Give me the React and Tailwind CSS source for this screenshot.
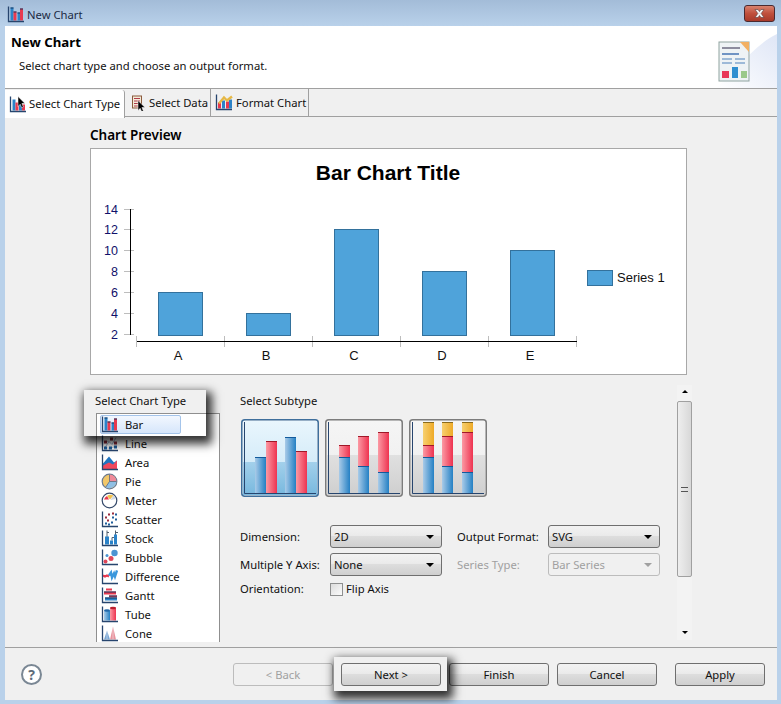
const NAVY = "#27456e";
const RED = "#e8394f";
const BLUE = "#2c83c8";

function Axis() {
  return <path d="M1.500 0v15H17" fill="none" stroke={NAVY} strokeWidth="1.300" />;
}

function Icon({ w = 17, children }) {
  return (
    <svg width={w} height="17" viewBox={`0 0 ${w} 16`} className="shrink-0">
      {children}
    </svg>
  );
}

function BarIcon() {
  return (
    <Icon>
      <rect x="3.500" y="1" width="3" height="13" fill={BLUE} />
      <rect x="6.500" y="5" width="3" height="9" fill={RED} />
      <rect x="10.500" y="6" width="2.500" height="8" fill={BLUE} />
      <rect x="13" y="2" width="3" height="12" fill={RED} />
      <path d="M3.500 1.500h3M6.500 5.500h3M10.500 6.500h2.500M13 2.500h3" stroke="#17375f" strokeWidth="1" />
      <Axis />
    </Icon>
  );
}

function LineIcon() {
  return (
    <Icon>
      <path d="M4 12l4-6 3 3 4-7" fill="none" stroke="#9fb1cc" strokeWidth="1" />
      <path d="M4 6h4M4 12l5 1 5-2" fill="none" stroke="#c2cede" strokeWidth="1" />
      <rect x="3" y="5" width="3" height="3" fill="#8c2b3a" />
      <rect x="9" y="2" width="3" height="3" fill="#8c2b3a" />
      <rect x="13" y="6" width="3" height="3" fill="#8c2b3a" />
      <rect x="3" y="11" width="3" height="3" fill="#1f5e9c" />
      <rect x="8" y="11" width="3" height="3" fill="#1f5e9c" />
      <rect x="13" y="10" width="3" height="3" fill="#1f5e9c" />
      <Axis />
    </Icon>
  );
}

function AreaIcon() {
  return (
    <Icon>
      <path d="M2 9l6-7 5 6 3-2v9H2z" fill="#1f74c0" />
      <path d="M2 11l6-3 4 2 4-4v9H2z" fill="#f0485c" />
      <Axis />
    </Icon>
  );
}

function PieIcon() {
  return (
    <Icon>
      <circle cx="8.500" cy="8" r="7.300" fill="#f2c768" stroke="#6b7a90" strokeWidth="1.200" />
      <path d="M8.500 8V1a7 7 0 0 1 6.800 7z" fill="#f08a9a" />
      <path d="M8.500 8h6.800a7 7 0 0 1-11 5.500z" fill="#8fbfe4" />
      <path d="M8.500 1v7l-4 6M8.500 8h7" fill="none" stroke="#5b6a80" strokeWidth="0.800" />
    </Icon>
  );
}

function MeterIcon() {
  return (
    <Icon>
      <circle cx="8.500" cy="8" r="7.300" fill="#fff" stroke="#34496a" strokeWidth="1.200" />
      <path d="M3 7a6 6 0 0 1 3-3.500L8 7z" fill={RED} />
      <path d="M6 3.500a6 6 0 0 1 6.500-.5L9 7z" fill="#f2c14e" />
      <path d="M12.500 3a6 6 0 0 1 2 3.500L9.500 7.500z" fill="#cfd8e4" />
    </Icon>
  );
}

function ScatterIcon() {
  const red = [[4, 5], [7, 2], [6, 8], [11, 1]];
  const blue = [[11, 5], [14, 7], [10, 10], [4, 11], [7, 12], [14, 2]];
  return (
    <Icon>
      {red.map(([x, y]) => (
        <rect key={`${x}-${y}`} x={x} y={y} width="2" height="2" fill="#9a2b3c" />
      ))}
      {blue.map(([x, y]) => (
        <rect key={`${x}-${y}`} x={x} y={y} width="2" height="2" fill="#1f5e9c" />
      ))}
      <Axis />
    </Icon>
  );
}

function StockIcon() {
  return (
    <Icon>
      <path d="M6 0v7M6 2h2M11 7v3M11 7h2M14.500 0v5M14.500 2h2.500" stroke="#53606f" strokeWidth="1" fill="none" />
      <rect x="4" y="6" width="4" height="8" fill={BLUE} />
      <rect x="9" y="10" width="3" height="4" fill={BLUE} />
      <rect x="13" y="4" width="3" height="10" fill={BLUE} />
      <Axis />
    </Icon>
  );
}

function BubbleIcon() {
  return (
    <Icon>
      <circle cx="13.500" cy="3.500" r="3.200" fill="#4c94d2" />
      <circle cx="10" cy="9" r="2.500" fill="#e0475a" />
      <circle cx="6" cy="6" r="1.500" fill="#4c94d2" />
      <circle cx="4.500" cy="12" r="2" fill="#e0475a" />
      <Axis />
    </Icon>
  );
}

function DifferenceIcon() {
  return (
    <Icon>
      <path d="M2 7l2 1 2-1 2 1" fill="none" stroke={RED} strokeWidth="2.200" />
      <path d="M8 7l2-3 1 5 2-4 1 3 2-6" fill="none" stroke="#3a97dc" strokeWidth="2.400" />
      <Axis />
    </Icon>
  );
}

function GanttIcon() {
  return (
    <Icon>
      <rect x="5" y="1" width="6" height="2" fill={RED} />
      <rect x="3" y="4" width="12" height="3" fill={RED} />
      <rect x="8" y="8" width="8" height="2" fill={RED} />
      <rect x="4" y="10" width="12" height="3" fill={BLUE} />
      <path d="M3 4.500h12M8 8.500h8M4 10.500h12" stroke="#17375f" strokeWidth="1" />
      <Axis />
    </Icon>
  );
}

function TubeIcon() {
  return (
    <Icon>
      <rect x="3" y="4" width="6" height="10" fill="url(#stackBlue)" />
      <rect x="9" y="1" width="6" height="13" fill="url(#stackRed)" />
      <ellipse cx="6" cy="4" rx="3" ry="1.200" fill="#2267a8" />
      <ellipse cx="12" cy="1.500" rx="3" ry="1.200" fill="#b8202f" />
      <Axis />
    </Icon>
  );
}

function ConeIcon() {
  return (
    <Icon>
      <path d="M3 14l3-9 3 9z" fill="#7aa6d4" />
      <path d="M9 14l3-13 3 13z" fill="#e8949e" />
      <path d="M6 5v9M12 1v13" stroke="#fff" strokeWidth="0.800" opacity="0.600" />
      <Axis />
    </Icon>
  );
}

function Cursor({ x, y }) {
  return (
    <path
      transform={`translate(${x} ${y})`}
      d="M0 0v10l2.200-2.200 1.500 3.500 1.700-.8L3.900 7H7z"
      fill="#000"
      stroke="#fff"
      strokeWidth="0.500"
    />
  );
}

function TypeTabIcon() {
  return (
    <Icon>
      <rect x="3.500" y="3" width="3" height="11" fill={BLUE} />
      <rect x="6.500" y="6" width="3" height="8" fill={RED} />
      <rect x="10" y="7" width="3" height="7" fill={BLUE} />
      <rect x="13" y="8" width="3" height="6" fill={RED} />
      <Axis />
      <Cursor x={9} y={0} />
    </Icon>
  );
}

function DataTabIcon() {
  return (
    <Icon w={16}>
      <rect x="1.500" y="1.500" width="9" height="12" fill="#f4ead8" stroke="#8a5a3c" />
      <path d="M3 4h6M3 6.500h6M3 9h6M3 11.500h4" stroke="#b03a48" strokeWidth="1" />
      <Cursor x={7} y={6} />
    </Icon>
  );
}

function FormatTabIcon() {
  return (
    <Icon w={18}>
      <rect x="3" y="8" width="3" height="6" fill={RED} />
      <rect x="7" y="6" width="3" height="8" fill={BLUE} />
      <rect x="11" y="7" width="3" height="7" fill={RED} />
      <rect x="14" y="5" width="3" height="9" fill={BLUE} />
      <path d="M4 9l5-6 3 3 5-4" fill="none" stroke="#e6b845" strokeWidth="2.400" />
      <Axis />
    </Icon>
  );
}

function WizardIcon() {
  return (
    <svg width="62" height="62" viewBox="3 0 62 62" className="shrink-0">
      <defs>
        <linearGradient id="wizardBack" x1="0" y1="1" x2="1" y2="0">
          <stop offset="0" stopColor="#fff" />
          <stop offset="1" stopColor="#dfe6f6" />
        </linearGradient>
      </defs>
      <path d="M4 62C22 48 40 20 65 8v54z" fill="url(#wizardBack)" />
      <rect x="7" y="16" width="30" height="39" fill="#eef3f5" stroke="#8fa3a0" />
      <path d="M28 16h9v10z" fill="#f2b063" />
      <path d="M10 22h18" stroke="#8d8d9e" strokeWidth="2" />
      <path d="M10 28h17" stroke="#6f94c4" strokeWidth="2" />
      <path d="M10 33h10M23 33h10M10 37h10M23 37h10" stroke="#9dbad8" strokeWidth="2" />
      <rect x="10" y="45" width="7" height="7" fill="#e8395a" />
      <rect x="20" y="41" width="6" height="11" fill="#2f8fd0" />
      <rect x="29" y="45" width="6" height="7" fill="#9ac98a" />
    </svg>
  );
}

function Column({ x, top, bottom = 74, fill, line }) {
  return (
    <g>
      <rect x={x} y={top} width="11" height={bottom - top} fill={`url(#${fill})`} />
      <path d={`M${x} ${top + 0.5}h11`} stroke={line} strokeWidth="1" />
    </g>
  );
}

function Stack({ x, blue, red, yellow }) {
  return (
    <g>
      {yellow != null && <Column x={x} top={yellow} bottom={red} fill="stackYellow" line="#8a6a1c" />}
      <Column x={x} top={red} bottom={blue} fill="stackRed" line="#a01828" />
      <Column x={x} top={blue} fill="stackBlue" line="#125a9c" />
    </g>
  );
}

function SubtypeDefs() {
  return (
    <svg width="0" height="0" className="absolute">
      <defs>
        <linearGradient id="stackBlue" x1="0" x2="1" y1="0" y2="0">
          <stop offset="0" stopColor="#a9cbe8" />
          <stop offset="1" stopColor="#2480c4" />
        </linearGradient>
        <linearGradient id="stackRed" x1="0" x2="1" y1="0" y2="0">
          <stop offset="0" stopColor="#fb9aa4" />
          <stop offset="1" stopColor="#ee3350" />
        </linearGradient>
        <linearGradient id="stackYellow" x1="0" x2="1" y1="0" y2="0">
          <stop offset="0" stopColor="#f7d070" />
          <stop offset="1" stopColor="#eeaa28" />
        </linearGradient>
        <linearGradient id="skyTop" x1="0" x2="0" y1="0" y2="1">
          <stop offset="0" stopColor="#e9f6fd" />
          <stop offset="1" stopColor="#c4e3f5" />
        </linearGradient>
        <linearGradient id="skyBottom" x1="0" x2="0" y1="0" y2="1">
          <stop offset="0" stopColor="#a3d0eb" />
          <stop offset="1" stopColor="#78b8de" />
        </linearGradient>
        <linearGradient id="greyTop" x1="0" x2="0" y1="0" y2="1">
          <stop offset="0" stopColor="#f5f5f5" />
          <stop offset="1" stopColor="#ececec" />
        </linearGradient>
        <linearGradient id="greyBottom" x1="0" x2="0" y1="0" y2="1">
          <stop offset="0" stopColor="#e0e0e0" />
          <stop offset="1" stopColor="#cfcfcf" />
        </linearGradient>
      </defs>
    </svg>
  );
}

function SubtypeButton({ selected, children, split }) {
  return (
    <svg width="78" height="78" viewBox="0 0 78 78" className="shrink-0">
      <rect x="2" y="2" width="74" height="74" fill={`url(#${selected ? "skyTop" : "greyTop"})`} />
      <rect x="2" y={split} width="74" height={76 - split} fill={`url(#${selected ? "skyBottom" : "greyBottom"})`} />
      {children}
      <path d="M3.500 3v71.500H75" fill="none" stroke={NAVY} strokeWidth="1" />
      <rect
        x="0.750"
        y="0.750"
        width="76.500"
        height="76.500"
        rx="3"
        fill="none"
        stroke={selected ? "#3f6f9c" : "#7c7c7c"}
        strokeWidth="1.500"
      />
    </svg>
  );
}

function Select({ value, disabled }) {
  return (
    <div
      className={
        disabled
          ? "flex h-[23px] items-center justify-between rounded-[3px] border border-[#bcbcbc] bg-[#f0f0f0] pl-[3px] pr-[7px] text-[#a0a0a0]"
          : "flex h-[23px] items-center justify-between rounded-[3px] border border-[#6f6f6f] bg-[linear-gradient(#f2f2f2_0%,#ebebeb_45%,#dddddd_50%,#cfcfcf_100%)] pl-[3px] pr-[7px] text-[#111]"
      }
    >
      <span>{value}</span>
      <span className={disabled ? "h-0 w-0 border-x-[4px] border-t-[4px] border-x-transparent border-t-[#a0a0a0]" : "h-0 w-0 border-x-[4px] border-t-[4px] border-x-transparent border-t-black"} />
    </div>
  );
}

function WizardButton({ children, disabled, className }) {
  return (
    <div
      className={
        (disabled
          ? "flex h-[23px] items-center justify-center rounded-[3px] border border-[#bcbcbc] bg-[#f0f0f0] text-[#a0a0a0] "
          : "flex h-[23px] items-center justify-center rounded-[3px] border border-[#6f6f6f] bg-[linear-gradient(#f2f2f2_0%,#ebebeb_45%,#dddddd_50%,#cfcfcf_100%)] text-[#111] ") + className
      }
    >
      {children}
    </div>
  );
}

const chartTypes = [
  { label: "Bar", TypeIcon: BarIcon },
  { label: "Line", TypeIcon: LineIcon },
  { label: "Area", TypeIcon: AreaIcon },
  { label: "Pie", TypeIcon: PieIcon },
  { label: "Meter", TypeIcon: MeterIcon },
  { label: "Scatter", TypeIcon: ScatterIcon },
  { label: "Stock", TypeIcon: StockIcon },
  { label: "Bubble", TypeIcon: BubbleIcon },
  { label: "Difference", TypeIcon: DifferenceIcon },
  { label: "Gantt", TypeIcon: GanttIcon },
  { label: "Tube", TypeIcon: TubeIcon },
  { label: "Cone", TypeIcon: ConeIcon },
];

const chartBars = [
  { label: "A", x: 67, top: 143 },
  { label: "B", x: 155, top: 164 },
  { label: "C", x: 243, top: 80 },
  { label: "D", x: 331, top: 122 },
  { label: "E", x: 419, top: 101 },
];

const yTicks = [
  { label: "14", y: 60 },
  { label: "12", y: 80 },
  { label: "10", y: 101 },
  { label: "8", y: 122 },
  { label: "6", y: 143 },
  { label: "4", y: 164 },
  { label: "2", y: 185 },
];

function ChartPreview() {
  return (
    <svg width="595" height="225" viewBox="0 0 595 225" className="block font-['Liberation_Sans',sans-serif]">
      <text x="297" y="31" textAnchor="middle" fontSize="21" fontWeight="700" fill="#000">
        Bar Chart Title
      </text>
      {yTicks.map((t) => (
        <g key={t.label}>
          <path d={`M33 ${t.y + 0.5}h10`} stroke="#bdbdbd" strokeWidth="1" />
          <text x="27" y={t.y + 5} textAnchor="end" fontSize="12.500" fill="#10106a">
            {t.label}
          </text>
        </g>
      ))}
      <path d="M39.500 60v126" stroke="#000" strokeWidth="1" />
      {[46, 134, 222, 310, 398, 486].map((x) => (
        <path key={x} d={`M${x - 0.5} 187v11`} stroke="#bdbdbd" strokeWidth="1" />
      ))}
      <path d="M46 192.500h440" stroke="#000" strokeWidth="1" />
      {chartBars.map((b) => (
        <g key={b.label}>
          <rect x={b.x + 0.5} y={b.top + 0.5} width="44" height={186 - b.top} fill="#4fa3da" stroke="#33719c" strokeWidth="1" />
          <text x={b.x + 20} y="211" textAnchor="middle" fontSize="13" fill="#111">
            {b.label}
          </text>
        </g>
      ))}
      <rect x="496.500" y="121.500" width="25" height="15" fill="#4fa3da" stroke="#33719c" strokeWidth="1" />
      <text x="526" y="133" fontSize="13" fill="#111">
        Series 1
      </text>
    </svg>
  );
}

export default function App() {
  return (
    <div className="flex h-[704px] w-[781px] flex-col overflow-hidden whitespace-nowrap bg-[#b9d1ea] font-['Noto_Sans',sans-serif] text-[11.25px] leading-[18px] text-[#111]">
      <SubtypeDefs />

      <div className="flex h-[26px] shrink-0 items-center bg-[linear-gradient(#a3bcd8,#b9d1ea)] pl-[7px] pr-[6px] pt-[3px]">
        <BarIcon />
        <span className="ml-[3px] text-[#1c2a44]">New Chart</span>
        <div className="-mt-[3px] ml-auto flex h-[17px] w-[31px] items-center justify-center rounded-[3px] border border-[#4a2a30] bg-[linear-gradient(#d8826f,#c0503c_50%,#a83a2a)]">
          <svg width="15" height="11" viewBox="0 0 15 11">
            <path d="M3 1.500h3L7.500 3.500 9 1.500h3L9.200 5.500 12 9.500H9L7.500 7.500 6 9.500H3L5.800 5.500z" fill="#f2f2f2" stroke="#5a3a3a" strokeWidth="0.600" />
          </svg>
        </div>
      </div>

      <div className="ml-[5px] mr-[4px] flex min-h-0 flex-1 flex-col bg-[#f0f0f0]">
        <div className="flex h-[63px] shrink-0 items-end justify-between border-b border-[#a0a0a0] bg-white">
          <div className="self-start pt-[7px]">
            <div className="pl-[6px] text-[13.250px] font-bold leading-[18px] text-black">New Chart</div>
            <div className="pl-[14px] pt-[6px]">Select chart type and choose an output format.</div>
          </div>
          <WizardIcon />
        </div>

        <div className="flex h-[28px] shrink-0 border-b border-[#a0a0a0]">
          <div className="-mb-px mt-px flex h-[28px] w-[120px] items-center rounded-tr-[3px] border-r border-[#a0a0a0] bg-white pl-[4px]">
            <TypeTabIcon />
            <span className="ml-[3px]">Select Chart Type</span>
          </div>
          <div className="flex w-[86px] items-center border-r border-[#a0a0a0] pl-[6px]">
            <DataTabIcon />
            <span className="ml-[2px]">Select Data</span>
          </div>
          <div className="flex w-[98px] items-center border-r border-[#a0a0a0] pl-[4px]">
            <FormatTabIcon />
            <span className="ml-[3px]">Format Chart</span>
          </div>
        </div>

        <div className="ml-[85px] flex w-[602px] flex-1 flex-col">
          <div className="mt-[9px] h-[18px] text-[13.500px] font-semibold text-black">Chart Preview</div>
          <div className="mt-[4px] h-[227px] w-[597px] border border-[#a8a8a8] bg-white">
            <ChartPreview />
          </div>

          <div className="relative mt-[10px] flex h-[257px]">
            <div className="w-[150px]">
              <div className="ml-[5px] mt-[7px]">Select Chart Type</div>
              <div className="ml-[6px] mt-[3px] h-[229px] w-[124px] overflow-hidden border border-b-0 border-[#8f8f8f] bg-white pt-px">
                {chartTypes.map(({ label, TypeIcon }, i) => (
                  <div
                    key={label}
                    className={
                      i === 0
                        ? "ml-[3px] flex h-[19px] w-[81px] items-center rounded-[2px] border border-[#a4c4ea] bg-[linear-gradient(#f2f7fe,#d6e6fb)]"
                        : "ml-[3px] flex h-[19px] w-[81px] items-center border border-transparent"
                    }
                  >
                    <TypeIcon />
                    <span className="ml-[7px]">{label}</span>
                  </div>
                ))}
              </div>
            </div>

            <div className="w-[437px]">
              <div className="mt-[7px]">Select Subtype</div>
              <div className="ml-px mt-[9px] flex gap-[6px]">
                <SubtypeButton selected split={43}>
                  <Column x={14} top={38} fill="stackBlue" line="#125a9c" />
                  <Column x={25} top={22} fill="stackRed" line="#a01828" />
                  <Column x={44} top={18} fill="stackBlue" line="#125a9c" />
                  <Column x={55} top={32} fill="stackRed" line="#a01828" />
                </SubtypeButton>
                <SubtypeButton split={36}>
                  <Stack x={14} blue={38} red={26} />
                  <Stack x={33} blue={47} red={17} />
                  <Stack x={53} blue={53} red={13} />
                </SubtypeButton>
                <SubtypeButton split={36}>
                  <Stack x={14} blue={38} red={26} yellow={3} />
                  <Stack x={33} blue={47} red={17} yellow={3} />
                  <Stack x={53} blue={53} red={13} yellow={3} />
                </SubtypeButton>
              </div>

              <div className="mt-[28px] grid grid-cols-[90px_112px_106px_112px] gap-y-[5px]">
                <div className="flex items-center">Dimension:</div>
                <Select value="2D" />
                <div className="flex items-center pl-[15px]">Output Format:</div>
                <Select value="SVG" />
                <div className="flex items-center">Multiple Y Axis:</div>
                <Select value="None" />
                <div className="flex items-center pl-[15px] text-[#a0a0a0]">Series Type:</div>
                <Select value="Bar Series" disabled />
                <div className="flex h-[16px] items-center">Orientation:</div>
                <div className="flex h-[16px] items-center">
                  <span className="h-[13px] w-[13px] border border-[#8e8f8f] bg-[linear-gradient(135deg,#dcdcdc,#fbfbfb)]" />
                  <span className="ml-[3px]">Flip Axis</span>
                </div>
              </div>
            </div>

            <div className="flex h-[255px] w-[15px] flex-col items-center bg-[#f3f3f3]">
              <span className="mt-[5px] h-0 w-0 border-x-[3px] border-b-[3px] border-x-transparent border-b-black" />
              <div className="mt-[8px] flex h-[176px] w-[15px] items-center justify-center rounded-[2px] border border-[#a0a0a0] bg-[linear-gradient(90deg,#eeeeee,#d8d8d8)]">
                <span className="h-[5px] w-[7px] border-y border-[#555]" />
              </div>
              <span className="mt-[54px] h-0 w-0 border-x-[3px] border-t-[3px] border-x-transparent border-t-black" />
            </div>

            <div className="pointer-events-none absolute left-[-6px] top-[5px] z-10 h-[46px] w-[122px] shadow-[3px_5px_9px_3px_rgba(0,0,0,0.8)]" />
          </div>
        </div>

        <div className="flex h-[53px] shrink-0 items-start border-t border-[#a0a0a0] pt-[15px]">
          <div className="ml-[16px] mt-px flex h-[21px] w-[21px] items-center justify-center rounded-full border-2 border-[#7a8794] bg-white text-[14px] font-bold text-[#5d6b7a]">
            ?
          </div>
          <WizardButton disabled className="ml-[191px] w-[100px]">&lt; Back</WizardButton>
          <div className="relative ml-[8px]">
            <WizardButton className="w-[100px]">Next &gt;</WizardButton>
            <div className="pointer-events-none absolute -left-[7px] -top-[6px] z-10 h-[34px] w-[113px] shadow-[3px_5px_9px_3px_rgba(0,0,0,0.8)]" />
          </div>
          <WizardButton className="ml-[8px] w-[100px]">Finish</WizardButton>
          <WizardButton className="ml-[8px] w-[100px]">Cancel</WizardButton>
          <WizardButton className="ml-[18px] w-[90px]">Apply</WizardButton>
        </div>
      </div>
      <div className="h-[4px] shrink-0" />
    </div>
  );
}
